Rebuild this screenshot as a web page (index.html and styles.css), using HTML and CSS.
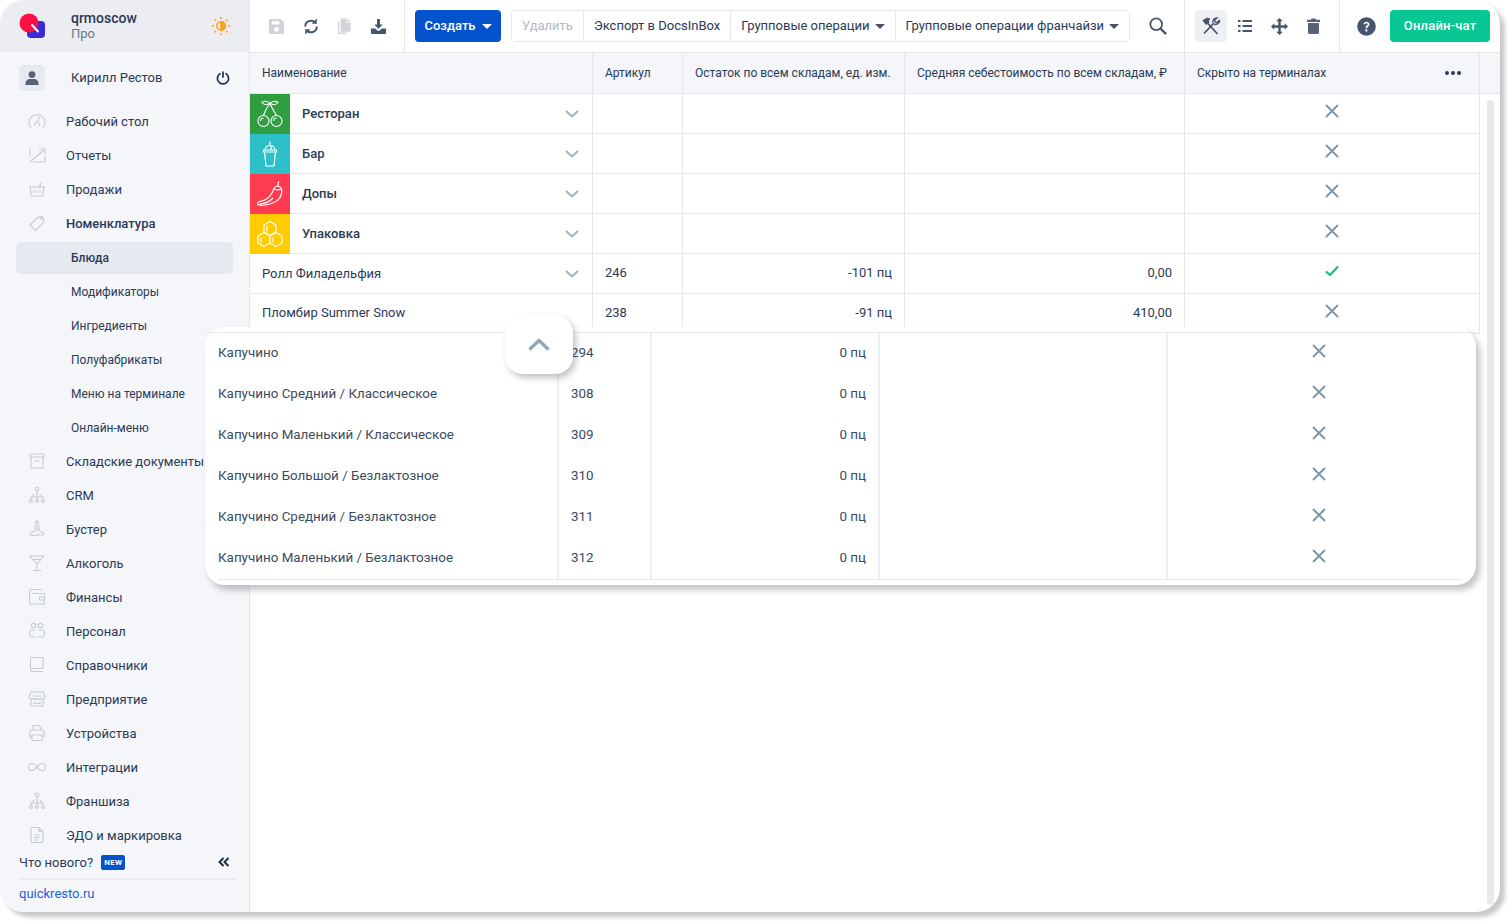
FILE: index.html
```html
<!DOCTYPE html>
<html lang="ru">
<head>
    <meta charset="UTF-8">
    <title>Блюда</title>
    <link rel="stylesheet" href="styles.css">
</head>
<body>

<div class="app">
    <aside class="sidebar">
        <div class="side-head">
            <svg class="logo" width="28" height="28" viewBox="0 0 28 28">
                <rect x="8" y="9" width="18" height="17" rx="4" fill="#3a2bd6"/>
                <circle cx="10" cy="11" r="9.500" fill="#fb0f45"/>
                <path d="M13 13l6 6.500" stroke="#fff" stroke-width="2" stroke-linecap="round"/>
            </svg>
            <div class="org">
                <div class="org-name">qrmoscow</div>
                <div class="org-plan">Про</div>
            </div>
            <svg class="sun" width="20" height="20" viewBox="0 0 20 20" fill="none" stroke="#f9a11b" stroke-width="1.6">
                <circle cx="10" cy="10" r="4.2"/>
                <path d="M10 5.8a4.2 4.2 0 0 1 0 8.4z" fill="#f9a11b"/>
                <path d="M10 1v2M10 17v2M1 10h2M17 10h2M3.6 3.6L5 5M15 15l1.4 1.4M3.6 16.4L5 15M15 5l1.4-1.4"/>
            </svg>
        </div>
        <div class="user">
            <div class="avatar">
                <svg width="14" height="14" viewBox="0 0 14 14" fill="#56637a">
                    <circle cx="7" cy="3.6" r="3.4"/>
                    <path d="M0.5 14v-1.6C0.5 9.6 3 8 4.6 8h4.8c1.6 0 4.1 1.6 4.1 4.4V14z"/>
                </svg>
            </div>
            <span class="user-name">Кирилл Рестов</span>
            <svg width="14" height="14" viewBox="0 0 14 14" fill="none" stroke="#1f2d45" stroke-width="1.7" stroke-linecap="round">
                <path d="M4 2.6a5.6 5.6 0 1 0 6 0M7 1v5"/>
            </svg>
        </div>
        <nav class="nav">
            <a class="nav-item"><svg class="nav-ico" viewBox="0 0 20 20"><path d="M4 17a8 8 0 1 1 12 0M8 15a2.4 2.4 0 1 1 4 0M10.5 11l2-5"/></svg>Рабочий стол</a>
            <a class="nav-item"><svg class="nav-ico" viewBox="0 0 20 20"><path d="M3 4v7M3 17l14-12M12 4h6v5M6 17h12v-6"/></svg>Отчеты</a>
            <a class="nav-item"><svg class="nav-ico" viewBox="0 0 20 20"><path d="M2 8h16M3 8l1.5 9h11L17 8M12 8l3-5M7 11v3M10 11v3M13 11v3"/></svg>Продажи</a>
            <a class="nav-item nav-bold"><svg class="nav-ico" viewBox="0 0 20 20"><path d="M3 12l7-7 4-1.500 3 3-1.500 4-7 7zM13 7l3-4"/></svg>Номенклатура</a>
            <a class="nav-sub active">Блюда</a>
            <a class="nav-sub">Модификаторы</a>
            <a class="nav-sub">Ингредиенты</a>
            <a class="nav-sub">Полуфабрикаты</a>
            <a class="nav-sub">Меню на терминале</a>
            <a class="nav-sub">Онлайн-меню</a>
            <a class="nav-item"><svg class="nav-ico" viewBox="0 0 20 20"><path d="M3 3h14v3H3zM4 6v11h12V6M8 10h4"/></svg>Складские документы</a>
            <a class="nav-item"><svg class="nav-ico" viewBox="0 0 20 20"><circle cx="10" cy="4" r="1.8"/><path d="M10 6v4M4 14v-2h12v2M10 10v4M7 9l-2 3M13 9l2 3"/><circle cx="4" cy="16" r="1.4"/><circle cx="10" cy="16" r="1.4"/><circle cx="16" cy="16" r="1.4"/></svg>CRM</a>
            <a class="nav-item"><svg class="nav-ico" viewBox="0 0 20 20"><circle cx="10" cy="3.5" r="1.6"/><path d="M10 6v7M8 6v5c0 2-5 2-5 4s4 1.5 7 1 7 1 7-1-5-2-5-4V6"/></svg>Бустер</a>
            <a class="nav-item"><svg class="nav-ico" viewBox="0 0 20 20"><path d="M3 3h14l-7 8zM6 6.500h8M10 11v6M6 17.500h8"/></svg>Алкоголь</a>
            <a class="nav-item"><svg class="nav-ico" viewBox="0 0 20 20"><path d="M15 2.500H5a2.500 2.500 0 0 0-2.500 2.500v10A2 2 0 0 0 4.500 17h13V6.500H4.500M17.500 10h-5v3h5"/></svg>Финансы</a>
            <a class="nav-item"><svg class="nav-ico" viewBox="0 0 20 20"><circle cx="6.500" cy="4.500" r="2.300"/><circle cx="13.500" cy="4.500" r="2.300"/><path d="M8 9H5c-2 0-2.500 1.500-2.500 3 0 2 1 4 3 4h3M12 9h3c2 0 2.500 1.500 2.500 3 0 2-1 4-3 4h-3"/></svg>Персонал</a>
            <a class="nav-item"><svg class="nav-ico" viewBox="0 0 20 20"><path d="M5 2.500h11v11H5a2 2 0 0 0-1.500.500V4a1.500 1.500 0 0 1 1.500-1.500zM3.500 14.500a2 2 0 0 0 1.500 2h11"/></svg>Справочники</a>
            <a class="nav-item"><svg class="nav-ico" viewBox="0 0 20 20"><path d="M4 3h12l2 5a2.500 2.500 0 0 1-4 1.500 3 3 0 0 1-4 0 3 3 0 0 1-4 0A2.500 2.500 0 0 1 2 8zM4 10.500V17h12v-6.500M7 13v1.500h6V13M7 6v2M10 6v2M13 6v2"/></svg>Предприятие</a>
            <a class="nav-item"><svg class="nav-ico" viewBox="0 0 20 20"><path d="M6 7V2.500h6L14 5v2M5 14H3V9a2 2 0 0 1 2-2h10a2 2 0 0 1 2 2v5h-2M5 12h10v5.500H5z"/></svg>Устройства</a>
            <a class="nav-item"><svg class="nav-ico" viewBox="0 0 20 20"><path d="M10 10C8 7 6.500 6.500 5 6.500a3.500 3.500 0 0 0 0 7c1.500 0 3-.5 5-3.500s3.500-3.500 5-3.500a3.500 3.500 0 0 1 0 7c-1.500 0-3-.5-5-3.500z"/></svg>Интеграции</a>
            <a class="nav-item"><svg class="nav-ico" viewBox="0 0 20 20"><circle cx="10" cy="4" r="1.8"/><path d="M10 6v4M4 14v-2h12v2M10 10v4M7 9l-2 3M13 9l2 3"/><circle cx="4" cy="16" r="1.4"/><circle cx="10" cy="16" r="1.4"/><circle cx="16" cy="16" r="1.4"/></svg>Франшиза</a>
            <a class="nav-item"><svg class="nav-ico" viewBox="0 0 20 20"><path d="M5 2.500h7l4 4V16a1.500 1.500 0 0 1-1.500 1.500h-9.500A1.500 1.500 0 0 1 4 16V4a1.500 1.500 0 0 1 1-1.500zM12 2.500v4h4M7 10h6M7 12.500h6M7 15h4"/></svg>ЭДО и маркировка</a>
        </nav>
        <div class="side-foot">
            <div class="news">
                <span>Что нового?</span>
                <span class="badge">NEW</span>
                <svg class="collapse" width="12" height="10" viewBox="0 0 12 10" fill="none" stroke="#1f2d45" stroke-width="2">
                    <path d="M5.500 1L1.500 5l4 4M10.500 1l-4 4 4 4"/>
                </svg>
            </div>
            <div class="site"><a>quickresto.ru</a></div>
        </div>
    </aside>

    <main class="main">
        <div class="toolbar">
            <div class="tb-sec">
                <button class="tb-ico"><svg width="17" height="17" viewBox="0 0 18 18" fill="#d0d4da"><path fill-rule="evenodd" d="M3 1h10.500L17 4.500V15a2 2 0 0 1-2 2H3a2 2 0 0 1-2-2V3a2 2 0 0 1 2-2zm1 2.500v3.500h8V3.500zM9 9.500a2.600 2.600 0 1 0 0 5.200 2.600 2.600 0 0 0 0-5.200z"/></svg></button>
                <button class="tb-ico tb-sync"><svg width="16" height="17" viewBox="0 0 18 18" fill="none" stroke="#46556e" stroke-width="2.200"><path d="M2.500 9a6.500 6.500 0 0 1 11-4.700M15.500 9a6.500 6.500 0 0 1-11 4.700"/><path d="M15.500 0v5.800h-5.800zM2.500 18v-5.800h5.800z" fill="#46556e" stroke="none"/></svg></button>
                <button class="tb-ico"><svg width="17" height="18" viewBox="0 0 18 18" fill="#d0d4da"><path d="M6 1h5v4.500h4.500V14a1 1 0 0 1-1 1H6a1 1 0 0 1-1-1V2a1 1 0 0 1 1-1zM12 1l3.500 3.500H12zM3.500 4v12h8v1.500H3a1 1 0 0 1-1-1V4z"/></svg></button>
                <button class="tb-ico"><svg width="17" height="17" viewBox="0 0 18 18" fill="#46556e"><path d="M7.500 1h3v6h3L9 11.500 4.500 7h3zM1 11h4.500L8 13.500h2L12.500 11H17v5a1 1 0 0 1-1 1H2a1 1 0 0 1-1-1z"/></svg></button>
            </div>
            <div class="tb-sec tb-actions">
                <button class="btn-create">Создать<span class="caret caret-white"></span></button>
                <div class="btn-group">
                    <button class="btn-g btn-off">Удалить</button>
                    <button class="btn-g">Экспорт в DocsInBox</button>
                    <button class="btn-g">Групповые операции<span class="caret"></span></button>
                    <button class="btn-g">Групповые операции франчайзи<span class="caret"></span></button>
                </div>
                <button class="tb-ico tb-search"><svg width="18" height="18" viewBox="0 0 20 20" fill="none" stroke="#46556e" stroke-width="2"><circle cx="8" cy="8" r="6.500"/><path d="M12.500 12.500L19 19" stroke-width="2.600"/></svg></button>
            </div>
            <div class="tb-sec">
                <button class="tb-ico tb-on"><svg width="20" height="18" viewBox="0 0 20 18" fill="none" stroke="#46556e"><path d="M2 3.500L6 1l3 1-1.500 1.500L8 5 5 7.500z" fill="#46556e" stroke-width="1"/><path d="M6.500 6l10 11M3 16.500L12 7" stroke-width="1.800"/><path d="M18.500 3l-2.500 2.500-2-.5-.5-2L16 1a4 4 0 0 0-4 5.500" stroke-width="1.400"/><path d="M12 6.500A4 4 0 0 0 18.500 3" stroke-width="1.400"/></svg></button>
                <button class="tb-ico"><svg width="14" height="12" viewBox="0 0 14 12" fill="#46556e"><path d="M0 0h2.500v2H0zM4.500 0H14v2H4.500zM0 5h2.500v2H0zM4.500 5H14v2H4.500zM0 10h2.500v2H0zM4.500 10H14v2H4.500z"/></svg></button>
                <button class="tb-ico"><svg width="17" height="17" viewBox="0 0 18 18" fill="#46556e"><path d="M9 0l3.500 3.500h-2.200v4.200h4.200V5.500L18 9l-3.500 3.500v-2.200h-4.200v4.200h2.200L9 18l-3.500-3.500h2.200v-4.200H3.500v2.200L0 9l3.500-3.500v2.200h4.200V3.500H5.500z"/></svg></button>
                <button class="tb-ico"><svg width="13" height="16" viewBox="0 0 13 16" fill="#56637a"><path d="M0 1.800h3.800L4.800.5h3.400l1 1.300H13V4H0zM1 5h11v9.500a1.500 1.500 0 0 1-1.500 1.500h-8A1.500 1.500 0 0 1 1 14.500z"/></svg></button>
            </div>
            <div class="tb-sec tb-last">
                <button class="tb-ico"><svg width="19" height="19" viewBox="0 0 20 20"><circle cx="10" cy="10" r="9.800" fill="#46556e"/><path d="M6.800 7.600C7 5.800 8.300 4.900 10 4.900c1.800 0 3.200 1 3.200 2.700 0 2.300-2.500 2.300-2.500 4.200H9c0-3 2.300-2.900 2.300-4.100 0-.8-.6-1.200-1.300-1.200-.8 0-1.300.5-1.400 1.200z" fill="#fff"/><circle cx="9.900" cy="14.200" r="1.200" fill="#fff"/></svg></button>
                <button class="btn-chat">Онлайн-чат</button>
            </div>
        </div>

        <div class="table-area">
            <table class="grid">
                <colgroup>
                    <col class="c-name"><col class="c-art"><col class="c-rest"><col class="c-cost"><col class="c-hide"><col class="c-gut">
                </colgroup>
                <thead>
                    <tr>
                        <th>Наименование</th>
                        <th>Артикул</th>
                        <th>Остаток по всем складам, ед. изм.</th>
                        <th>Средняя себестоимость по всем складам, ₽</th>
                        <th><div class="th-last">Скрыто на терминалах<span class="dots"><i></i><i></i><i></i></span></div></th>
                        <th class="th-gut"></th>
                    </tr>
                </thead>
                <tbody>
                    <tr>
                        <td class="cat-cell"><div class="cat">
                            <span class="tile t-green"><svg width="28" height="28" viewBox="0 0 28 28" fill="none" stroke="#fff" stroke-width="1.100"><circle cx="7.500" cy="21" r="5.500"/><circle cx="20.500" cy="21" r="5.500"/><path d="M7.500 15.500C9 11 11 7 14 3.500c1.500 4 4 8 6.500 12M4.500 21a3 3 0 0 1 3-3M17.500 21a3 3 0 0 1 3-3"/><path d="M14 3.500C11 .5 7.500 1 6 2.500 8 5 11 5 14 3.500zM14 3.500c3-3 6.500-2.500 8-1-2 2.500-5 2.500-8 1z"/></svg></span>
                            <b>Ресторан</b><svg class="chev" width="14" height="8" viewBox="0 0 14 8" fill="none" stroke="#9fb1c1" stroke-width="2"><path d="M1 1l6 5.500L13 1"/></svg>
                        </div></td>
                        <td></td><td></td><td></td>
                        <td class="mark"><svg class="x" width="14" height="14" viewBox="0 0 14 14"><path d="M1 1l12 12M13 1L1 13"/></svg></td>
                    </tr>
                    <tr>
                        <td class="cat-cell"><div class="cat">
                            <span class="tile t-teal"><svg width="28" height="28" viewBox="0 0 28 28" fill="none" stroke="#fff" stroke-width="1.200"><path d="M8.500 12h11L18 26h-8zM7.500 10h13v2h-13zM9 10c.5-3.500 2.500-4.500 5-4.500s4.500 1 5 4.500M14 5.500V1.500M14.500 6l1 3.500"/></svg></span>
                            <b>Бар</b><svg class="chev" width="14" height="8" viewBox="0 0 14 8" fill="none" stroke="#9fb1c1" stroke-width="2"><path d="M1 1l6 5.500L13 1"/></svg>
                        </div></td>
                        <td></td><td></td><td></td>
                        <td class="mark"><svg class="x" width="14" height="14" viewBox="0 0 14 14"><path d="M1 1l12 12M13 1L1 13"/></svg></td>
                    </tr>
                    <tr>
                        <td class="cat-cell"><div class="cat">
                            <span class="tile t-red"><svg width="28" height="28" viewBox="0 0 28 28" fill="none" stroke="#fff" stroke-width="1.200"><path d="M22 6c3 1 4.500 4 3.500 8-1.500 6-8 10-16 11-4 .500-8 .500-8-1.500 0-1.500 2-2 4-2.500 5-1 9-5 11-9 1-2.500 1.500-6 5.500-6zM22 6c-.5-2 0-3.500 1-5M18 8.500c1 1.500 5 2 7 .5M4 24c5-.5 10-2.500 13-6"/></svg></span>
                            <b>Допы</b><svg class="chev" width="14" height="8" viewBox="0 0 14 8" fill="none" stroke="#9fb1c1" stroke-width="2"><path d="M1 1l6 5.500L13 1"/></svg>
                        </div></td>
                        <td></td><td></td><td></td>
                        <td class="mark"><svg class="x" width="14" height="14" viewBox="0 0 14 14"><path d="M1 1l12 12M13 1L1 13"/></svg></td>
                    </tr>
                    <tr>
                        <td class="cat-cell"><div class="cat">
                            <span class="tile t-yellow"><svg width="28" height="28" viewBox="0 0 28 28" fill="none" stroke="#fff" stroke-width="1.200"><path d="M14 1.500l6 3.500v7l-6 3.500L8 12V5zM8 12.500l6 3.500v7l-6 3.500L2 23v-7zM20 12.500l6 3.500v7l-6 3.500-6-3.500v-7zM11 6v5.500M5 17.500v5M17 17.500v5"/></svg></span>
                            <b>Упаковка</b><svg class="chev" width="14" height="8" viewBox="0 0 14 8" fill="none" stroke="#9fb1c1" stroke-width="2"><path d="M1 1l6 5.500L13 1"/></svg>
                        </div></td>
                        <td></td><td></td><td></td>
                        <td class="mark"><svg class="x" width="14" height="14" viewBox="0 0 14 14"><path d="M1 1l12 12M13 1L1 13"/></svg></td>
                    </tr>
                    <tr>
                        <td class="row-item"><div class="item">Ролл Филадельфия<svg class="chev" width="14" height="8" viewBox="0 0 14 8" fill="none" stroke="#9fb1c1" stroke-width="2"><path d="M1 1l6 5.500L13 1"/></svg></div></td>
                        <td>246</td>
                        <td class="num">-101 пц</td>
                        <td class="num">0,00</td>
                        <td class="mark"><svg class="check" width="14" height="12" viewBox="0 0 14 12" fill="none" stroke="#10c088" stroke-width="2.200"><path d="M1 6.500l4 3.500L13 1.500"/></svg></td>
                    </tr>
                    <tr>
                        <td>Пломбир Summer Snow</td>
                        <td>238</td>
                        <td class="num">-91 пц</td>
                        <td class="num">410,00</td>
                        <td class="mark"><svg class="x" width="14" height="14" viewBox="0 0 14 14"><path d="M1 1l12 12M13 1L1 13"/></svg></td>
                    </tr>
                </tbody>
            </table>
            <div class="scroll-thumb"></div>
        </div>

        <!-- раскрытая группа поверх таблицы -->
        <div class="pop">
            <table class="pop-table">
                <colgroup>
                    <col class="p-name"><col class="p-art"><col class="p-rest"><col class="p-cost"><col class="p-hide">
                </colgroup>
                <tbody>
                    <tr><td>Капучино</td><td>294</td><td class="num">0 пц</td><td></td><td class="mark"><svg class="x" width="14" height="14" viewBox="0 0 14 14"><path d="M1 1l12 12M13 1L1 13"/></svg></td></tr>
                    <tr><td>Капучино Средний / Классическое</td><td>308</td><td class="num">0 пц</td><td></td><td class="mark"><svg class="x" width="14" height="14" viewBox="0 0 14 14"><path d="M1 1l12 12M13 1L1 13"/></svg></td></tr>
                    <tr><td>Капучино Маленький / Классическое</td><td>309</td><td class="num">0 пц</td><td></td><td class="mark"><svg class="x" width="14" height="14" viewBox="0 0 14 14"><path d="M1 1l12 12M13 1L1 13"/></svg></td></tr>
                    <tr><td>Капучино Большой / Безлактозное</td><td>310</td><td class="num">0 пц</td><td></td><td class="mark"><svg class="x" width="14" height="14" viewBox="0 0 14 14"><path d="M1 1l12 12M13 1L1 13"/></svg></td></tr>
                    <tr><td>Капучино Средний / Безлактозное</td><td>311</td><td class="num">0 пц</td><td></td><td class="mark"><svg class="x" width="14" height="14" viewBox="0 0 14 14"><path d="M1 1l12 12M13 1L1 13"/></svg></td></tr>
                    <tr><td>Капучино Маленький / Безлактозное</td><td>312</td><td class="num">0 пц</td><td></td><td class="mark"><svg class="x" width="14" height="14" viewBox="0 0 14 14"><path d="M1 1l12 12M13 1L1 13"/></svg></td></tr>
                </tbody>
            </table>
            <div class="pop-end"></div>
        </div>
        <div class="pop-toggle">
            <svg width="22" height="13" viewBox="0 0 22 13" fill="none" stroke="#8fa7b8" stroke-width="3.400"><path d="M1.500 11.500L11 2.500l9.500 9"/></svg>
        </div>
    </main>
</div>

</body>
</html>
```

FILE: styles.css
```css
* {
    box-sizing: border-box;
}
html, body {
    margin: 0;
    height: 100%;
    background: #fff;
}
body {
    font-family: Roboto, "Noto Sans", sans-serif;
    font-size: 13px;
    color: #2b3a55;
    overflow: hidden;
}
.app {
    width: 1500px;
    height: 912px;
    display: flex;
    position: relative;
    border-radius: 24px;
    background: #fff;
    box-shadow: 5px 5px 4px rgba(60, 60, 60, 0.28);
}

/* Боковая панель */
.sidebar {
    width: 250px;
    flex: none;
    display: flex;
    flex-direction: column;
    background: #f4f6fa;
    border-right: 1px solid #e4e6ea;
    border-radius: 24px 0 0 24px;
    overflow: hidden;
}
.side-head {
    height: 52px;
    flex: none;
    display: flex;
    align-items: center;
    padding: 0 19px;
    background: #ebedf2;
}
.org {
    margin: -2px 0 0 24px;
    flex: 1;
}
.org-name {
    font-size: 14px;
    font-weight: 500;
    line-height: 17px;
    color: #2b3a55;
}
.org-plan {
    font-size: 13px;
    line-height: 14px;
    color: #6a7689;
}
.sun {
    margin-right: -1px;
}
.user {
    height: 52px;
    flex: none;
    display: flex;
    align-items: center;
    padding: 0 19px;
}
.avatar {
    width: 26px;
    height: 26px;
    border-radius: 5px;
    background: #e6e9ef;
    display: flex;
    align-items: center;
    justify-content: center;
}
.user-name {
    flex: 1;
    margin: -2px 0 0 26px;
}
.nav {
    flex: 1;
    overflow: hidden;
}
.nav-item, .nav-sub {
    display: flex;
    align-items: center;
    height: 34px;
    white-space: nowrap;
}
.nav-item {
    padding-left: 27px;
}
.nav-bold {
    font-weight: 500;
}
.nav-ico {
    width: 20px;
    height: 20px;
    margin-right: 19px;
    flex: none;
    fill: none;
    stroke: #c6cad1;
    stroke-width: 1.1;
}
.nav-sub {
    padding: 2px 0 0 71px;
    font-size: 12px;
}
.nav-sub.active {
    height: 32px;
    margin: 2px 16px 0;
    padding: 0 0 0 55px;
    background: #e7e9f0;
    border-radius: 5px;
    font-weight: 500;
}
.side-foot {
    flex: none;
    height: 60px;
    padding: 0 13px 0 19px;
}
.news {
    display: flex;
    align-items: center;
    height: 28px;
    padding: 0 6px 6px 0;
    border-bottom: 2px solid #e9ebf0;
}
.badge {
    margin-left: 8px;
    padding: 0 3px;
    height: 15px;
    line-height: 15px;
    font-size: 8px;
    font-weight: 700;
    letter-spacing: 0.3px;
    color: #fff;
    background: #0452cc;
    border-radius: 2px;
}
.collapse {
    margin-left: auto;
}
.site {
    margin-top: 6px;
    color: #1f5ed8;
}

/* Панель инструментов */
.main {
    flex: 1;
    min-width: 0;
    display: flex;
    flex-direction: column;
}
.toolbar {
    height: 53px;
    flex: none;
    display: flex;
    border-bottom: 1px solid #e4e6ea;
}
.tb-sec {
    display: flex;
    align-items: center;
    gap: 2px;
    padding: 0 10px;
    border-right: 1px solid #e4e6ea;
}
.tb-actions {
    gap: 10px;
}
.tb-last {
    flex: 1;
    border-right: 0;
    gap: 8px;
}
.tb-ico {
    width: 32px;
    height: 32px;
    padding: 0;
    border: 0;
    background: none;
    border-radius: 4px;
    display: flex;
    align-items: center;
    justify-content: center;
}
.tb-on {
    background: #eef0f4;
}
.tb-sync {
    padding-left: 2px;
}
.tb-search {
    margin-left: 2px;
}
button {
    font-family: inherit;
    cursor: pointer;
}
.btn-create {
    width: 86px;
    height: 32px;
    border: 0;
    border-radius: 4px;
    background: #0452cc;
    color: #fff;
    font-size: 13px;
    font-weight: 500;
    padding: 0 0 2px;
}
.caret {
    display: inline-block;
    vertical-align: middle;
    margin-left: 5px;
    border-left: 5px solid transparent;
    border-right: 5px solid transparent;
    border-top: 5px solid #46556e;
}
.caret-white {
    border-top-color: #fff;
    margin-left: 6px;
}
.btn-group {
    display: flex;
    height: 32px;
    border: 1px solid #e6e8ec;
    border-radius: 4px;
}
.btn-g {
    height: 30px;
    padding: 0 10px 2px;
    border: 0;
    border-right: 1px solid #e6e8ec;
    background: #fff;
    color: #2b3a55;
    font-size: 13px;
    white-space: nowrap;
}
.btn-g:last-child {
    border-right: 0;
}
.btn-off {
    color: #b4b9c2;
}
.btn-chat {
    width: 100px;
    height: 32px;
    padding: 0 0 2px;
    border: 0;
    border-radius: 4px;
    background: #08c792;
    color: #fff;
    font-size: 13px;
    font-weight: 500;
    letter-spacing: 0.2px;
}

/* Таблица */
.table-area {
    position: relative;
    flex: 1;
    min-height: 0;
}
.grid {
    width: 1250px;
    table-layout: fixed;
    border-collapse: separate;
    border-spacing: 0;
}
.c-name { width: 343px; }
.c-art { width: 90px; }
.c-rest { width: 222px; }
.c-cost { width: 280px; }
.c-hide { width: 295px; }
.c-gut { width: 20px; }
.grid th {
    height: 41px;
    padding: 0 12px 1px;
    text-align: left;
    font-size: 12px;
    font-weight: 400;
    white-space: nowrap;
    background: #f4f6fa;
    border-right: 1px solid #e4e6ea;
    border-bottom: 1px solid #e4e6ea;
}
.grid .th-gut {
    border-right: 0;
    padding: 0;
}
.th-last {
    display: flex;
    align-items: center;
    justify-content: space-between;
}
.dots {
    display: flex;
    gap: 2px;
    margin-right: 6px;
}
.dots i {
    width: 4px;
    height: 4px;
    border-radius: 50%;
    background: #2b3a55;
}
.grid td {
    height: 40px;
    padding: 0 12px 2px;
    border-right: 1px solid #e4e6ea;
    border-bottom: 1px solid #e4e6ea;
}
.grid .cat-cell {
    padding: 0;
}
.grid .row-item {
    padding-bottom: 0;
}
.cat {
    display: flex;
    align-items: center;
    height: 39px;
    padding-right: 13px;
}
.cat b {
    flex: 1;
    margin-left: 12px;
    font-weight: 500;
}
.tile {
    width: 40px;
    height: 40px;
    margin-top: 1px;
    display: flex;
    align-items: center;
    justify-content: center;
}
.t-green { background: #2f9e41; }
.t-teal { background: #2ec0c9; }
.t-red { background: #ff3b50; }
.t-yellow { background: #ffcc00; }
.item {
    display: flex;
    align-items: center;
    justify-content: space-between;
    padding-right: 1px;
}
.num {
    text-align: right;
}
.mark {
    text-align: center;
}
.mark svg {
    display: block;
    margin: -3px auto 0;
}
.x {
    fill: none;
    stroke: #7d96ab;
    stroke-width: 1.9;
}
.scroll-thumb {
    position: absolute;
    left: 1237px;
    top: 47px;
    width: 7px;
    height: 805px;
    border-radius: 4px;
    background: #e6e9ee;
}

/* Раскрытая группа */
.pop {
    position: absolute;
    left: 205px;
    top: 327px;
    width: 1271px;
    height: 258px;
    padding-top: 5px;
    background: #fff;
    border-radius: 20px;
    box-shadow: 4px 5px 6px rgba(60, 60, 60, 0.3);
}
.pop-table {
    width: 100%;
    table-layout: fixed;
    border-collapse: separate;
    border-spacing: 0;
    border-top: 1px solid #e8eaee;
    color: #3b4a60;
    font-size: 13.4px;
}
.p-name { width: 354px; }
.p-art { width: 93px; }
.p-rest { width: 228px; }
.p-cost { width: 288px; }
.pop-table td {
    height: 41px;
    padding: 0 12px 3px;
    border-right: 2px solid #eceef1;
    white-space: nowrap;
}
.pop-table td:first-child {
    padding-left: 13px;
}
.pop-table td:last-child {
    border-right: 0;
    padding-right: 19px;
}
.pop-table .mark svg {
    margin-top: -3px;
}
.pop-end {
    margin: 0 16px 0 13px;
    border-top: 1px solid #e8eaee;
}
.pop-toggle {
    position: absolute;
    left: 505px;
    top: 315px;
    width: 68px;
    height: 59px;
    display: flex;
    align-items: center;
    justify-content: center;
    background: #fff;
    border-radius: 18px;
    box-shadow: 3px 4px 6px rgba(60, 60, 60, 0.3);
    z-index: 2;
}
```
